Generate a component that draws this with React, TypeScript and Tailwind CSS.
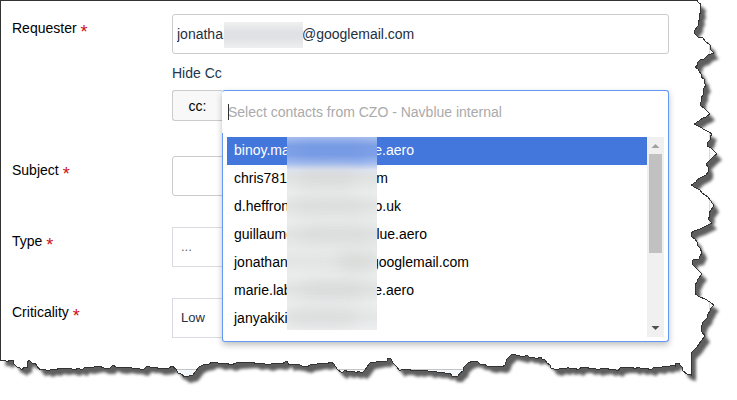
import { ReactNode } from 'react';
import clsx from 'clsx';

interface Contact {
  start: string;
  end: string;
  width: string;
}

const contacts: Contact[] = [
  { start: 'binoy.ma', end: 'e.aero', width: 'w-[180px]' },
  { start: 'chris781', end: 'om', width: 'w-[154px]' },
  { start: 'd.heffron', end: 'o.uk', width: 'w-[167px]' },
  { start: 'guillaume', end: 'lue.aero', width: 'w-[193px]' },
  { start: 'jonathan', end: 'googlemail.com', width: 'w-[235px]' },
  { start: 'marie.lab', end: 'e.aero', width: 'w-[180px]' },
  { start: 'janyakiki', end: '', width: 'w-[180px]' },
];

const smudges = [
  'left-[10px] top-[8px] w-[70px] bg-[#7095e3]',
  'left-[12px] top-[34px] w-[56px] bg-[#d3d4d4]',
  'left-[8px] top-[62px] w-[70px] bg-[#d7d8d8]',
  'left-[12px] top-[90px] w-[72px] bg-[#d7d8d8]',
  'left-[50px] top-[118px] w-[36px] bg-[#cfd3cf]',
  'left-[14px] top-[146px] w-[64px] bg-[#d4d4d5]',
  'left-[2px] top-[174px] w-[68px] bg-[#d5d6d6]',
];

// right side runs top to bottom, bottom side runs right to left
const edge =
  'M.5 360V.5H697L699 3L701 4L700 8L701 12L699 15L700 19L698 22L698 26L694 31L694 33L698 37L703 38L706 42L710 45L711 50L714 53L708 55L704 59L700 60L697 63L698 65L695 67L698 69L699 71L701 74L701 77L704 79L704 83L706 85L703 90L703 95L701 98L701 102L700 105L705 109L710 114L706 117L703 118L699 121L694 124L700 127L705 130L709 132L712 134L710 137L710 140L708 142L707 146L711 148L714 151L717 154L713 157L710 160L706 164L708 167L708 172L706 175L702 177L697 180L696 182L691 185L696 188L700 190L702 193L708 197L711 201L714 206L711 210L709 213L710 216L708 219L712 223L706 226L700 229L694 231L691 233L692 237L695 239L697 242L697 245L700 248L702 253L700 256L699 259L693 260L692 264L697 269L702 274L698 279L697 282L695 285L696 288L695 291L695 294L700 297L705 299L710 302L714 305L711 308L710 311L708 314L707 318L703 322L701 328L702 332L705 336L701 341L697 347L691 353V375L687 374L683 371L682 367L680 365L679 363L675 363L675 366L671 365L669 367L663 366L661 368L654 367L651 370L646 368L642 369L638 367L635 369L632 367L625 367L620 368L618 371L614 369L610 370L607 368L600 369L597 370L595 368L590 369L587 367L582 367L578 370L575 368L570 369L568 367L566 369L561 368L557 370L551 368L550 365L547 363L545 360L542 359L541 357L536 359L534 357L529 357L527 355L523 357L520 356L512 354L509 357L507 359L505 365L502 367L495 366L492 367L487 366L484 364L480 364L478 362L473 361L468 363L464 367L463 371L460 373L458 376L452 376L450 373L447 374L443 372L437 372L434 371L429 372L427 370L422 370L420 371L416 370L413 371L408 369L402 369L400 371L397 367L393 363L391 359L388 358L387 361L381 361L376 362L370 363L367 367L365 370L362 373L358 371L357 373L353 371L348 372L345 370L342 373L337 369L334 364L331 362L326 364L321 363L317 364L310 365L307 367L302 366L300 365L292 364L289 365L287 361L282 364L274 363L268 365L262 363L257 364L252 362L236 363L231 365L226 363L220 364L216 362L212 362L209 364L203 365L199 367L196 371L193 375L185 377L181 374L178 373L176 369L172 366L169 368L160 369L155 367L150 367L147 366L143 370L137 368L132 368L127 367L122 368L116 367L113 365L110 368L104 368L99 366L94 367L89 368L85 367L82 370L78 368L75 370L69 368L64 369L59 368L56 370L52 369L48 371L44 369L40 370L37 366L35 363L32 363L29 360L27 363L27 367L24 367L22 370L20 368L17 367L14 364L13 360L10 360L7 362L5 360Z';

function PaperSheet() {
  return (
    <svg
      className="absolute inset-0 size-full"
      viewBox="0 0 737 400"
      preserveAspectRatio="none"
      aria-hidden="true"
    >
      <defs>
        <clipPath id="sheet">
          <path d={edge} />
        </clipPath>
        <filter id="soften" x="-5%" y="-5%" width="110%" height="110%" colorInterpolationFilters="sRGB">
          <feGaussianBlur stdDeviation="1.7" />
        </filter>
      </defs>
      <path d={edge} transform="translate(5 6)" fill="#5e5e5e" filter="url(#soften)" />
      <path d={edge} fill="#fff" />
      <g clipPath="url(#sheet)">
        <path d="M709.5 0V400" stroke="#d8dcde" />
        <path d="M710 0H737V400H710Z" fill="#f6f8fa" />
        <path d="M172 370H669V400H172Z" fill="#f5f8fa" />
        <path d="M172 369.5H669" stroke="#c4c4c4" />
      </g>
      <path d={edge} fill="none" stroke="#333" shapeRendering="crispEdges" />
    </svg>
  );
}

function FormRow({ id, label, children }: { id: string; label: string; children: ReactNode }) {
  return (
    <div className="grid grid-cols-[160px_1fr] items-start">
      <label htmlFor={id} className="flex items-center gap-1 pt-1 leading-5 text-black">
        {label}
        <span className="h-5 text-lg leading-7 text-[#cc1118]">*</span>
      </label>
      <div className="min-w-0">{children}</div>
    </div>
  );
}

function ContactPicker() {
  return (
    <div className="absolute inset-x-0 top-0 z-10 rounded-[3px] shadow-[0_3px_6px_rgba(0,0,0,0.25)]">
      <div className="relative h-[43px] rounded-t-[3px] border-t border-r border-[#6199f5] bg-white">
        <input
          id="cc"
          type="text"
          placeholder="Select contacts from CZO - Navblue internal"
          className="size-full bg-transparent px-[6px] placeholder:text-[#aaaaaa] focus:outline-none"
        />
        <span className="absolute top-[13px] left-[6px] h-4 w-px bg-[#333333]" />
      </div>

      <div className="relative flex rounded-b-[3px] border-x border-b border-[#6199f5] bg-white p-1">
        <ul role="listbox" aria-label="Contacts" className="h-[200px] flex-1 overflow-hidden">
          {contacts.map((contact, i) => (
            <li
              key={contact.start}
              role="option"
              aria-selected={i === 0}
              className={clsx(
                'h-7 px-[7px] leading-[27px]',
                i === 0 ? 'bg-[#4477db] text-white' : 'text-black'
              )}
            >
              <span className={clsx('flex justify-between', contact.width)}>
                <span>{contact.start}</span>
                <span>{contact.end}</span>
              </span>
            </li>
          ))}
        </ul>

        <div className="absolute top-1 left-16 h-[193px] w-[90px] overflow-hidden bg-[linear-gradient(#a9bfed_0px,#7d9fe6_9px,#7fa1e7_18px,#a4bdf0_26px,#dfe4ee_33px,#e0e1e1_40px,#ebecec_56px,#e2e3e3_68px,#ebecec_84px,#e1e2e2_97px,#e9eaea_112px,#e3e5e4_124px,#ebecec_139px,#e1e2e2_152px,#ebecec_166px,#e4e5e5_180px,#eeeff0_193px)]">
          {smudges.map((smudge) => (
            <span
              key={smudge}
              className={clsx('absolute h-[14px] rounded-full opacity-70 blur-[8px]', smudge)}
            />
          ))}
        </div>

        <div className="flex w-[17px] flex-col items-center bg-[#f0f0f0]">
          <svg className="h-[17px] w-[17px] shrink-0" viewBox="0 0 17 17" aria-hidden="true">
            <path d="M4.500 11L8.500 7L12.500 11Z" fill="#a0a0a0" />
          </svg>
          <div className="h-[99px] w-[13px] bg-[#c1c1c1]" />
          <svg className="mt-auto h-[17px] w-[17px] shrink-0" viewBox="0 0 17 17" aria-hidden="true">
            <path d="M4.500 6L8.500 10L12.500 6Z" fill="#505050" />
          </svg>
        </div>
      </div>
    </div>
  );
}

export default function App() {
  return (
    <main className="relative bg-white font-['Liberation_Sans',Arial,sans-serif] text-sm">
      <PaperSheet />

      <form className="relative flex flex-col gap-[31px] pt-[14px] pr-[68px] pb-[62px] pl-3">
        <FormRow id="requester" label="Requester">
          <div className="relative">
            <div className="flex h-10 items-center rounded-[3px] border border-[#cccccc] bg-white px-1">
              <input
                id="requester"
                type="text"
                defaultValue="jonatha"
                className="w-[125px] text-[#22303f] focus:outline-none"
              />
              <span className="text-[#22303f]">@googlemail.com</span>
            </div>
            <span className="absolute top-2 left-[52px] h-[26px] w-[79px] bg-[linear-gradient(#eff0f1,#e0e1e4_40%,#e0e1e4_60%,#eeeff0)]" />
          </div>

          <a href="#cc" className="mt-[9px] block leading-5 text-[#22364c]">
            Hide Cc
          </a>

          <div className="mt-[7px] mb-1 flex h-[31px]">
            <label
              htmlFor="cc"
              className="flex w-[50px] items-center justify-center rounded-l-[3px] border border-r-0 border-[#cccccc] bg-[#f8f8f8] text-black"
            >
              cc:
            </label>
            <div className="relative flex-1">
              <ContactPicker />
            </div>
          </div>
        </FormRow>

        <FormRow id="subject" label="Subject">
          <input
            id="subject"
            type="text"
            className="block h-10 w-full rounded-[3px] border border-[#cccccc] bg-white px-2"
          />
        </FormRow>

        <FormRow id="type" label="Type">
          <select
            id="type"
            className="block h-10 w-full appearance-none border border-[#d8dce0] bg-white px-2 text-[13px] text-[#666666]"
          >
            <option>...</option>
          </select>
        </FormRow>

        <FormRow id="criticality" label="Criticality">
          <select
            id="criticality"
            className="block h-10 w-full appearance-none border border-[#d8dce0] bg-white px-2 text-[13px] text-[#22303f]"
          >
            <option>Low</option>
          </select>
        </FormRow>
      </form>
    </main>
  );
}
